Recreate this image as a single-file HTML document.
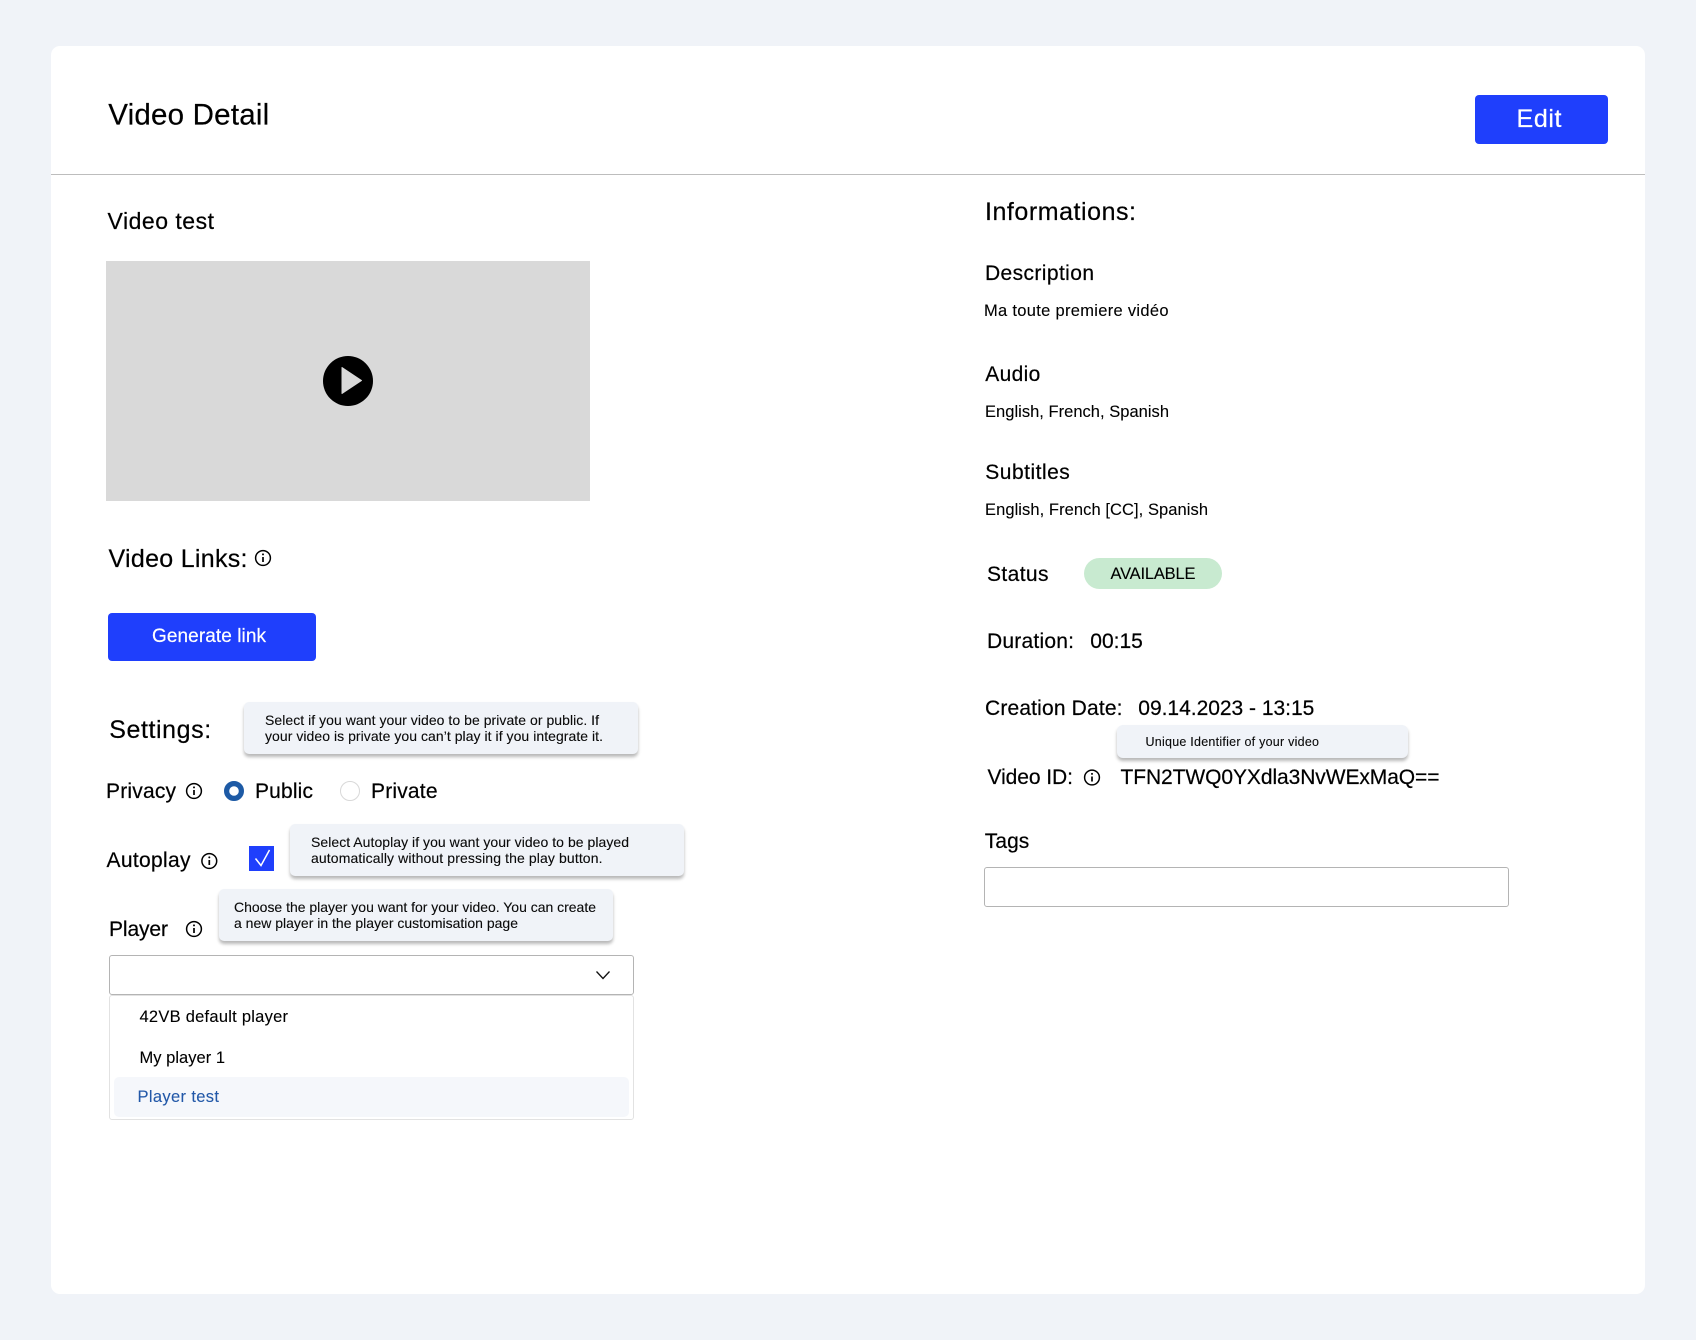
<!DOCTYPE html>
<html lang="en">
<head>
<meta charset="utf-8">
<title>Video Detail</title>
<style>
html,body{margin:0;padding:0;width:1696px;height:1340px;overflow:hidden;background:#f0f3f8;}
body{position:relative;font-family:"Liberation Sans",sans-serif;}
.b{position:absolute;box-sizing:border-box;}
#card{left:51px;top:46px;width:1594px;height:1248px;background:#fff;border-radius:9px;}
#hr{left:51px;top:174px;width:1594px;height:1px;background:#bdbdbd;}
.btn{background:#1f3ffc;border-radius:4px;}
.tip{background:#f0f3f8;border-radius:5px;box-shadow:0 3px 3px rgba(0,0,0,.28);}
svg{position:absolute;left:0;top:0;}
text{font-family:"Liberation Sans",sans-serif;fill:#000;stroke:#000;stroke-width:.2px;}
.t28{font-size:29.5px}.t24{font-size:25px}.t22{font-size:23px}.t20{font-size:21px}.t18{font-size:19px}.t16{font-size:16.5px;stroke-width:.1px}.t14{font-size:14px;fill:#0a0a0a;stroke-width:.1px}.t12{font-size:12.5px;fill:#0a0a0a;stroke-width:.1px}
</style>
</head>
<body>
<div class="b" id="card"></div>
<div class="b" id="hr"></div>
<div class="b btn" style="left:1475px;top:95px;width:133px;height:49px"></div>
<div class="b" style="left:106px;top:261px;width:484px;height:240px;background:#d9d9d9"></div>
<div class="b btn" style="left:108px;top:613px;width:208px;height:48px"></div>
<div class="b tip" style="left:244px;top:702px;width:394px;height:52px"></div>
<div class="b tip" style="left:290px;top:824px;width:394px;height:52px"></div>
<div class="b tip" style="left:219px;top:889px;width:394px;height:52px"></div>
<div class="b tip" style="left:1117px;top:725px;width:291px;height:33px;border-radius:6px"></div>
<div class="b" style="left:249px;top:846px;width:25px;height:25px;background:#1f3ffc"></div>
<div class="b" style="left:109px;top:955px;width:525px;height:40px;border:1px solid #b4b4b4;border-radius:3px;background:#fff"></div>
<div class="b" style="left:109px;top:995px;width:525px;height:125px;border:1px solid #e2e2e2;border-radius:3px;background:#fff"></div>
<div class="b" style="left:114px;top:1077px;width:515px;height:40px;background:#f5f7fb;border-radius:5px"></div>
<div class="b" style="left:1084px;top:558px;width:138px;height:31px;background:#c8ead0;border-radius:16px"></div>
<div class="b" style="left:984px;top:867px;width:525px;height:40px;border:1px solid #b4b4b4;border-radius:3px;background:#fff"></div>

<svg width="1696" height="1340" viewBox="0 0 1696 1340" xmlns="http://www.w3.org/2000/svg">
  <defs>
    <g id="info" fill="none" stroke="#000">
      <circle cx="0" cy="0" r="7.4" stroke-width="1.5"/>
      <path d="M0 -1V4" stroke-width="1.7"/>
      <circle cx="0" cy="-3.6" r="1" fill="#000" stroke="none"/>
    </g>
  </defs>

  <text class="t28" x="108.2" y="124.3" textLength="161">Video Detail</text>
  <text class="t24" x="1516.5" y="127" textLength="45" style="fill:#fff;stroke:#fff;font-size:25px">Edit</text>

  <text class="t22" x="107.5" y="229" textLength="106.5">Video test</text>
  <circle cx="348" cy="381" r="25" fill="#000"/>
  <path d="M342 367.5L361.5 380.5L342 393.5Z" fill="#d9d9d9" stroke="#d9d9d9" stroke-width="1" stroke-linejoin="round"/>

  <text class="t24" x="108.5" y="567" textLength="139">Video Links:</text>
  <use href="#info" x="263" y="558"/>
  <text class="t18" x="152" y="642" textLength="114" style="fill:#fff;stroke:#fff">Generate link</text>

  <text class="t24" x="109.2" y="738" textLength="102">Settings:</text>
  <text class="t14" x="265" y="725" textLength="334">Select if you want your video to be private or public. If</text>
  <text class="t14" x="265" y="741" textLength="338">your video is private you can’t play it if you integrate it.</text>

  <text class="t20" x="106" y="798" textLength="70">Privacy</text>
  <use href="#info" x="194" y="791"/>
  <circle cx="234" cy="791" r="7.4" fill="#fff" stroke="#1d5aa5" stroke-width="5.2"/>
  <text class="t20" x="255" y="798" textLength="58">Public</text>
  <circle cx="350" cy="791" r="9.5" fill="#fff" stroke="#d8d8d8" stroke-width="1"/>
  <text class="t20" x="371" y="798" textLength="66.5">Private</text>

  <text class="t20" x="106.5" y="867" textLength="84">Autoplay</text>
  <use href="#info" x="209.3" y="861"/>
  <path d="M255.5 858.5L261 865.5L269.5 850" fill="none" stroke="#fff" stroke-width="1.5"/>
  <text class="t14" x="311" y="847" textLength="318">Select Autoplay if you want your video to be played</text>
  <text class="t14" x="311" y="863" textLength="291.5">automatically without pressing the play button.</text>

  <text class="t20" x="109" y="936" textLength="59">Player</text>
  <use href="#info" x="194" y="929"/>
  <text class="t14" x="234" y="912" textLength="362">Choose the player you want for your video. You can create</text>
  <text class="t14" x="234" y="928" textLength="284">a new player in the player customisation page</text>

  <path d="M596.5 971.5L603 978.5L609.5 971.5" fill="none" stroke="#111" stroke-width="1.3"/>
  <text class="t16" x="139.5" y="1022" textLength="148.5">42VB default player</text>
  <text class="t16" x="139.5" y="1063" textLength="85.5">My player 1</text>
  <text class="t16" x="137.5" y="1102" textLength="81.5" style="fill:#2258a8;stroke:#2258a8">Player test</text>

  <text class="t24" x="985" y="220" textLength="151">Informations:</text>
  <text class="t20" x="985" y="280" textLength="109">Description</text>
  <text class="t16" x="984" y="316" textLength="184.5">Ma toute premiere vidéo</text>
  <text class="t20" x="985.3" y="381" textLength="55">Audio</text>
  <text class="t16" x="985" y="417" textLength="184">English, French, Spanish</text>
  <text class="t20" x="985.3" y="479" textLength="84.5">Subtitles</text>
  <text class="t16" x="985" y="515" textLength="223">English, French [CC], Spanish</text>

  <text class="t20" x="987" y="581" textLength="61.5">Status</text>
  <text class="t16" x="1110.5" y="579" textLength="85">AVAILABLE</text>
  <text class="t20" x="987" y="648" textLength="87">Duration:</text>
  <text class="t20" x="1090.3" y="648" textLength="52.5">00:15</text>
  <text class="t20" x="985" y="715" textLength="137.5">Creation Date:</text>
  <text class="t20" x="1138.3" y="715" textLength="176">09.14.2023 - 13:15</text>
  <text class="t12" x="1145.5" y="745.8" textLength="173.5">Unique Identifier of your video</text>
  <text class="t20" x="987.5" y="784" textLength="85.5">Video ID:</text>
  <use href="#info" x="1092" y="777.5"/>
  <text class="t20" x="1120.5" y="784" textLength="319">TFN2TWQ0YXdla3NvWExMaQ==</text>
  <text class="t20" x="984.8" y="848" textLength="44.5">Tags</text>
</svg>
</body>
</html>
